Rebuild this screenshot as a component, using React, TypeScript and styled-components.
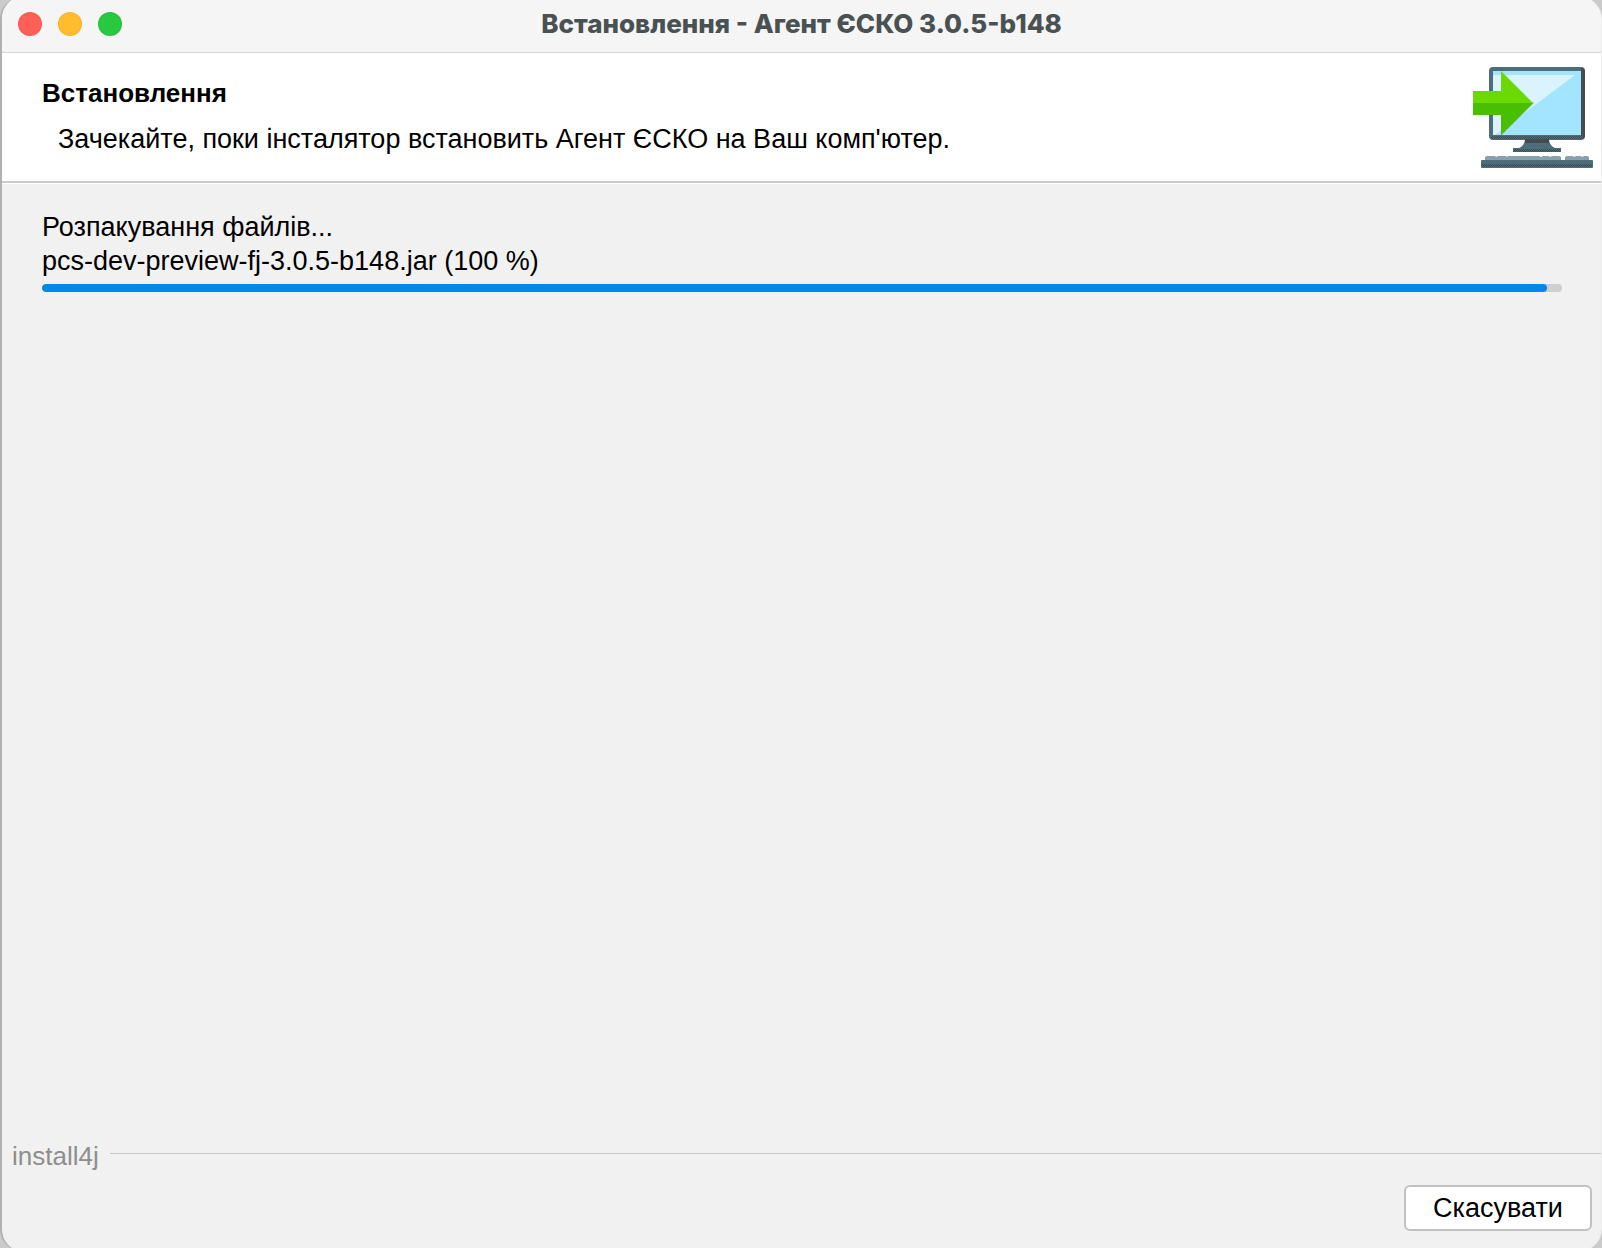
import React from "react";
import styled, { createGlobalStyle } from "styled-components";

const GlobalStyle = createGlobalStyle`
  * { box-sizing: border-box; }
  body {
    margin: 0;
    overflow: hidden;
    background: #cbcbcb;
    color: #000;
    font: 27px/34px "Liberation Sans", Arial, sans-serif;
  }
`;

const Window = styled.div`
  display: flex;
  flex-direction: column;
  height: calc(100vh + 6px);
  margin: -3px 0;
  padding: 3px 0;
  border-style: solid;
  border-color: #b0b0b0 #ececec #b0b0b0 #b0b0b0;
  border-width: 0 1px 0 2px;
  border-radius: 22px;
  overflow: hidden;
  background: linear-gradient(#f5f5f5 50px, #f1f1f1 50px);
`;

const TitleBar = styled.header`
  display: grid;
  grid-template-columns: 1fr auto 1fr;
  align-items: center;
  height: 53px;
  padding: 0 16px 4px;
  background: #f5f5f5;
  border-bottom: 1px solid #d6d6d6;
`;

const Lights = styled.div`
  display: flex;
  gap: 16px;
`;

const Light = styled.button<{ $color: string }>`
  width: 24px;
  height: 24px;
  padding: 0;
  border: 1px solid rgba(0, 0, 0, 0.04);
  border-radius: 50%;
  background: ${(p) => p.$color};
`;

const Title = styled.h1`
  margin: 0;
  font: 800 26px/32px Inter, sans-serif;
  color: #4a5152;
`;

const Banner = styled.section`
  display: flex;
  justify-content: space-between;
  align-items: flex-start;
  padding: 14px 8px 12px 40px;
  background: #fff;
  border-bottom: 2px solid #cbcbcb;
  box-shadow: 0 1px 0 #fff;
`;

const BannerText = styled.div`
  display: flex;
  flex-direction: column;
  gap: 12px;
  padding-top: 9px;
`;

const Heading = styled.h2`
  margin: 0;
  font-size: 26px;
  font-weight: 700;
`;

const Description = styled.p`
  margin: 0;
  padding-left: 16px;
`;

const Main = styled.main`
  flex: 1;
  padding: 27px 39px 0 40px;
`;

const Status = styled.p`
  margin: 0;
`;

const Progress = styled.progress`
  display: block;
  appearance: none;
  width: 100%;
  height: 8px;
  margin-top: 6px;
  border: 0;
  border-radius: 4px;
  overflow: hidden;
  background: #cfcfcf;

  &::-webkit-progress-bar {
    background: #cfcfcf;
    border-radius: 4px;
  }
  &::-webkit-progress-value {
    background: #0088eb;
    border-radius: 4px;
  }
`;

const Footer = styled.footer`
  padding-bottom: 17px;
`;

const Brand = styled.div`
  display: flex;
  align-items: center;
  gap: 11px;
  padding-left: 10px;
  font-size: 26px;
  color: #8e8e8e;
`;

const Rule = styled.hr`
  flex: 1;
  height: 1px;
  margin: 0 0 5px;
  border: 0;
  background: #c8c8c8;
`;

const Actions = styled.div`
  display: flex;
  justify-content: flex-end;
  padding: 12px 9px 0;
`;

const Button = styled.button`
  height: 46px;
  min-width: 188px;
  padding: 0 20px;
  border: 2px solid #c1c1c1;
  border-radius: 6px;
  background: #fff;
  color: #000;
  font: inherit;
`;

function InstallIcon() {
  return (
    <svg width="120" height="102" viewBox="0 0 120 102" aria-hidden="true">
      <defs>
        <pattern id="grain" width="2" height="2" patternUnits="userSpaceOnUse">
          <rect width="2" height="2" fill="#4d6d79" />
          <path d="M0 0h1v1H0zM1 1h1v1H1z" fill="#424b50" />
        </pattern>
      </defs>
      <rect x="16" y="0" width="96" height="73" rx="4" fill="#4d6d79" />
      <path d="M108 1q4 0 4 4v63q0 4-4 4z" fill="#424c51" />
      <path d="M18 69h92v2q-1 1-3 1H20q-2 0-2-1z" fill="url(#grain)" />
      <rect x="20" y="4" width="88" height="64" fill="#a3e4ff" />
      <path d="M20 8h82L22 68h-2z" fill="#dbf3fd" />
      <path d="M0 48h28v20h1l32-32-1-1H0z" fill="#7ba36a" opacity=".6" />
      <path d="M0 24h28V4l32 32H0z" fill="#6ad905" />
      <path d="M0 36h60L28 68V48H0z" fill="#48bf00" />
      <path d="M52 73h24q1 6 6 8h6v4H40v-4h6q5-2 6-8z" fill="#4d6d79" />
      <path d="M52 72h24v4H52z" fill="#424b50" />
      <path d="M40 82h48v3H40z" fill="url(#grain)" />
      <path
        d="M12 94v-4l2-1h8l1 1 2-1h8l1 1 1-1h31l2 1 2-1h6l1 1 2-1h7l2 1v4zM92 94v-4l2-1h6l1 1 2-1h5l1 1 2-1h3l2 1v4z"
        fill="#87a0ab"
      />
      <rect x="8" y="93" width="112" height="8" rx="1" fill="#4d6d79" />
      <rect x="9" y="97" width="110" height="3" fill="url(#grain)" />
    </svg>
  );
}

export default function App() {
  return (
    <>
      <GlobalStyle />
      <Window>
        <TitleBar>
          <Lights>
            <Light $color="#ff5f57" aria-label="Закрити" />
            <Light $color="#febc2e" aria-label="Згорнути" />
            <Light $color="#28c840" aria-label="Розгорнути" />
          </Lights>
          <Title>Встановлення - Агент ЄСКО 3.0.5-b148</Title>
        </TitleBar>
        <Banner>
          <BannerText>
            <Heading>Встановлення</Heading>
            <Description>
              Зачекайте, поки інсталятор встановить Агент ЄСКО на Ваш комп'ютер.
            </Description>
          </BannerText>
          <InstallIcon />
        </Banner>
        <Main>
          <Status>Розпакування файлів...</Status>
          <Status id="file">pcs-dev-preview-fj-3.0.5-b148.jar (100 %)</Status>
          <Progress value={99} max={100} aria-labelledby="file" />
        </Main>
        <Footer>
          <Brand>
            <span>install4j</span>
            <Rule />
          </Brand>
          <Actions>
            <Button type="button">Скасувати</Button>
          </Actions>
        </Footer>
      </Window>
    </>
  );
}
